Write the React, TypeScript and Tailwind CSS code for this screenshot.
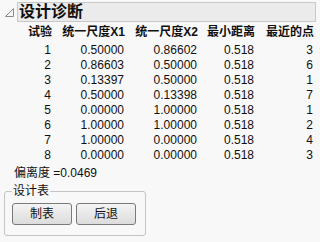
import React from "react";

const rows = [
  ["1", "0.50000", "0.86602", "0.518", "3"],
  ["2", "0.86603", "0.50000", "0.518", "6"],
  ["3", "0.13397", "0.50000", "0.518", "1"],
  ["4", "0.50000", "0.13398", "0.518", "7"],
  ["5", "0.00000", "1.00000", "0.518", "1"],
  ["6", "1.00000", "1.00000", "0.518", "2"],
  ["7", "1.00000", "0.00000", "0.518", "4"],
  ["8", "0.00000", "0.00000", "0.518", "3"],
];

const heads = ["试验", "统一尺度X1", "统一尺度X2", "最小距离", "最近的点"];

const font = {
  fontFamily: '"Liberation Sans", "Noto Sans CJK SC", sans-serif',
};

export default function App() {
  return (
    <div
      className="w-[320px] h-[242px] bg-[#f8f8f8] text-[#101010] overflow-hidden"
      style={font}
    >
      {/* title */}
      <div className="flex items-center pt-[2px] pr-[4px]">
        <svg width="17" height="20" viewBox="0 0 17 20" className="shrink-0">
          <path d="M5.5 14.5 L13.5 14.5 L13.5 6.5 Z" fill="#f4f4f4" stroke="#8a8a8a" />
        </svg>
        <div className="flex-1 h-[20px] bg-[#ebebeb] border border-[#c8c8c8] flex items-center pl-[1px] text-[16px] font-bold leading-none">
          设计诊断
        </div>
      </div>

      {/* table */}
      <div className="pl-[20px] mt-[3px] text-[12px] leading-[15px]">
        <div className="grid grid-cols-[32px_73px_73px_57px_59px] font-bold mb-[3px]">
          {heads.map((h) => (
            <div key={h} className="text-right whitespace-nowrap">
              {h}
            </div>
          ))}
        </div>
        {rows.map((r) => (
          <div key={r[0]} className="grid grid-cols-[32px_73px_73px_57px_59px]">
            {r.map((c, i) => (
              <div key={i} className="text-right pr-[1px]">
                {c}
              </div>
            ))}
          </div>
        ))}
      </div>

      <div className="pl-[14px] mt-[3px] text-[12px] leading-[15px]">偏离度 =0.0469</div>

      {/* fieldset */}
      <fieldset className="ml-[4px] mt-[3px] w-[142px] h-[52px] border border-[#c4c4c4] rounded-[3px] px-[7px] pt-[5px]">
        <legend className="text-[12px] leading-[14px] px-[1px]">设计表</legend>
        <div className="flex gap-[4px]">
          <button className="w-[60px] h-[22px] rounded-[3px] border border-[#7a7a7a] bg-gradient-to-b from-[#f4f4f4] to-[#dcdcdc] text-[12px] leading-none">
            制表
          </button>
          <button className="w-[60px] h-[22px] rounded-[3px] border border-[#7a7a7a] bg-gradient-to-b from-[#f4f4f4] to-[#dcdcdc] text-[12px] leading-none">
            后退
          </button>
        </div>
      </fieldset>
    </div>
  );
}
